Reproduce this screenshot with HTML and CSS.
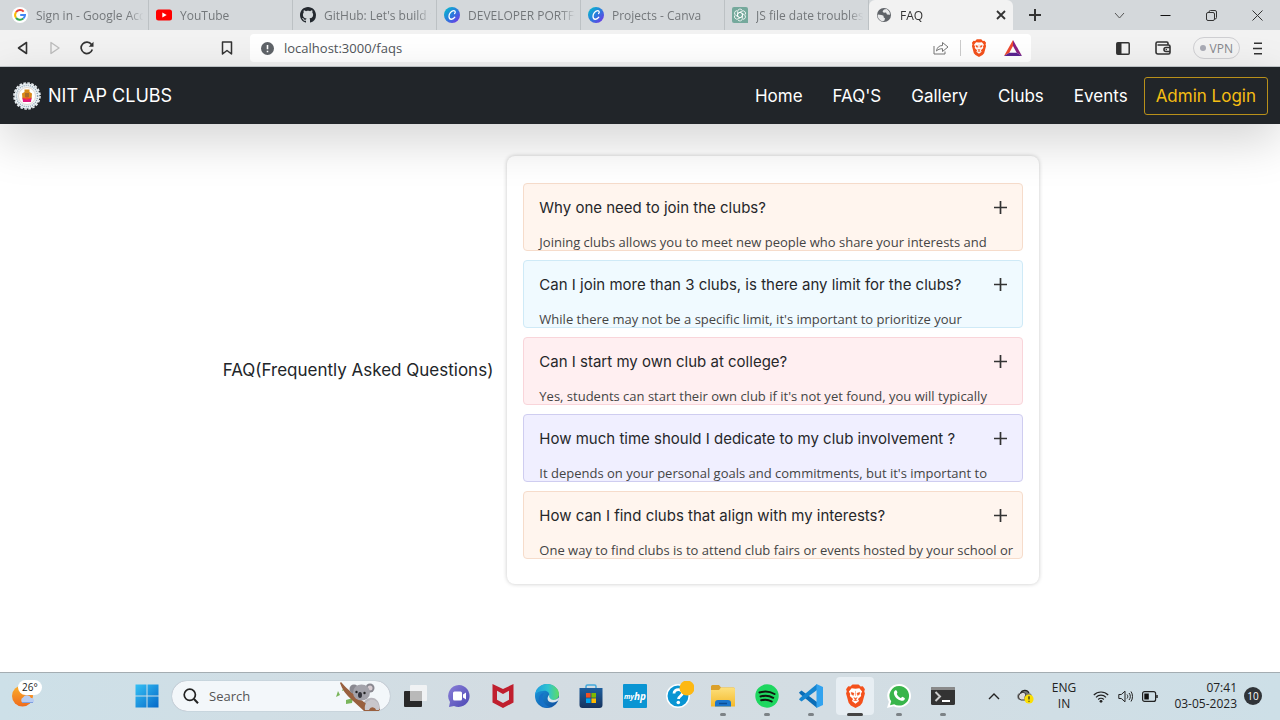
FILE: index.html
```html
<!DOCTYPE html>
<html lang="en">
<head>
<meta charset="utf-8">
<title>FAQ</title>
<link rel="stylesheet" href="styles.css">
</head>
<body>
<svg class="defs" aria-hidden="true">
  <defs>
    <linearGradient id="canva" x1="0" y1="0" x2="1" y2="1"><stop offset="0" stop-color="#00c4cc"/><stop offset=".5" stop-color="#2b7bdc"/><stop offset="1" stop-color="#7d2ae8"/></linearGradient>
    <linearGradient id="win" x1="0" y1="0" x2="1" y2="1"><stop offset="0" stop-color="#35c1f5"/><stop offset="1" stop-color="#0568c8"/></linearGradient>
    <linearGradient id="chat" x1="0" y1="0" x2="1" y2="1"><stop offset="0" stop-color="#8a7fd8"/><stop offset="1" stop-color="#4c48b4"/></linearGradient>
    <linearGradient id="edgeBlue" x1="0" y1="0" x2="1" y2="1"><stop offset="0" stop-color="#1b9de2"/><stop offset="1" stop-color="#0f4a9a"/></linearGradient>
    <linearGradient id="edgeTop" x1="0" y1="0" x2="1" y2="0"><stop offset="0" stop-color="#1d9ee0"/><stop offset=".55" stop-color="#2fc4cf"/><stop offset="1" stop-color="#5fdc62"/></linearGradient>
    <linearGradient id="sun" x1="0" y1="0" x2="0" y2="1"><stop offset="0" stop-color="#fbb02c"/><stop offset="1" stop-color="#ef6b1c"/></linearGradient>
    <linearGradient id="store" x1="0" y1="0" x2="0" y2="1"><stop offset="0" stop-color="#1d5f9e"/><stop offset="1" stop-color="#17335e"/></linearGradient>
    <linearGradient id="folder" x1="0" y1="0" x2="0" y2="1"><stop offset="0" stop-color="#fde07c"/><stop offset="1" stop-color="#f4b92b"/></linearGradient>
    <symbol id="i-canva" viewBox="0 0 16 16"><circle cx="8" cy="8" r="8" fill="url(#canva)"/><path d="M10.600 6.600c1-.8.9-3-.8-3C7.500 3.600 5 6.400 5 9.200c0 4 4 3.800 5.800 1" fill="none" stroke="#fff" stroke-width="1.300" stroke-linecap="round"/></symbol>
    <symbol id="i-brave" viewBox="0 0 24 28"><path d="M6 3 8.500.5h7L18 3l2.500-.3L23 6l-.8 2.500.8 2.500-3 11-2.500 3L12 28l-5.500-3L4 22 1 11l.8-2.500L1 6l2.500-3.300z" fill="#f4511c"/><path d="M12 5.500 16.500 5l3.200 3.800-1.500 3 .4 2.200-3.700 3.500 1.200 2.200L12 23l-4.100-3.300 1.200-2.200L5.400 14l.4-2.200-1.500-3L7.500 5z" fill="#fff"/><path d="M7 9.700l3.300 1.100-.8 2.600L7.300 12zM17 9.700l-3.300 1.100.8 2.600 2.200-1.400zM10 15.800l2 .8 2-.8-2 3zM12 8v6M9.600 19.500 12 18.300l2.400 1.200" fill="#f4511c" stroke="#f4511c" stroke-width=".5"/></symbol>
  </defs>
</svg>

<header class="tabs">
  <div class="tab"><svg class="fav" viewBox="0 0 16 16"><circle cx="8" cy="8" r="8" fill="#fff"/><g fill="none" stroke-width="2"><path d="M4 5.200A5 5 0 0 1 11.700 4.600" stroke="#ea4335"/><path d="M4 10.800a5 5 0 0 1 0-5.600" stroke="#fbbc05"/><path d="M11.300 11.600A5 5 0 0 1 4 10.800" stroke="#34a853"/><path d="M8.200 8H13a5 5 0 0 1-1.700 3.600" stroke="#4285f4"/></g></svg><span>Sign in - Google Acc</span></div>
  <div class="tab"><svg class="fav" viewBox="0 0 16 16"><rect y="2.500" width="16" height="11" rx="2.500" fill="#f00"/><path d="M6.300 5.500v5L10.700 8z" fill="#fff"/></svg><span>YouTube</span></div>
  <div class="tab"><svg class="fav" viewBox="0 0 16 16"><path fill="#24292f" d="M8 0C3.580 0 0 3.580 0 8c0 3.540 2.290 6.530 5.470 7.590.4.070.550-.17.550-.38 0-.19-.010-.82-.010-1.490-2.010.37-2.530-.49-2.690-.94-.09-.23-.48-.94-.82-1.130-.28-.15-.68-.52-.010-.53.630-.010 1.080.580 1.230.820.720 1.210 1.870.870 2.330.660.070-.52.280-.87.510-1.070-1.780-.2-3.640-.89-3.640-3.950 0-.87.310-1.590.820-2.150-.08-.2-.36-1.020.080-2.120 0 0 .67-.21 2.200.820.640-.18 1.320-.27 2-.27s1.360.090 2 .27c1.530-1.040 2.200-.82 2.200-.82.440 1.100.160 1.920.080 2.120.510.560.820 1.270.820 2.150 0 3.070-1.870 3.750-3.650 3.950.290.250.540.730.540 1.480 0 1.070-.010 1.930-.010 2.200 0 .21.150.460.550.380A8 8 0 0 0 16 8c0-4.420-3.580-8-8-8z"/></svg><span>GitHub: Let's build f</span></div>
  <div class="tab"><svg class="fav"><use href="#i-canva"/></svg><span>DEVELOPER PORTFO</span></div>
  <div class="tab"><svg class="fav"><use href="#i-canva"/></svg><span>Projects - Canva</span></div>
  <div class="tab"><svg class="fav" viewBox="0 0 16 16"><path d="M2 0h12a2 2 0 0 1 2 2v14H2a2 2 0 0 1-2-2V2a2 2 0 0 1 2-2z" fill="#75a99c"/><g fill="none" stroke="#fff" stroke-width=".8"><path id="petal" d="M5.600 6.600V4.400a2.500 2.500 0 0 1 4.600-1.200M8 5.200l2.400 1.400v2.800"/><use href="#petal" transform="rotate(60 8 8)"/><use href="#petal" transform="rotate(120 8 8)"/><use href="#petal" transform="rotate(180 8 8)"/><use href="#petal" transform="rotate(240 8 8)"/><use href="#petal" transform="rotate(300 8 8)"/></g></svg><span>JS file date troublesh</span></div>
  <div class="tab active"><svg class="fav" viewBox="0 0 16 16"><circle cx="8" cy="8" r="7" fill="#5f6368"/><path d="M2 7.500 5.500 8l2 .8.200 1.700 1.300.7-.5 2.300-1.500.8C4 14 1.800 11.500 1.600 8zM8 2.500 6.500 4.200l1.200 1.600 2.300-.3 1 2 3 .3C14 5 12.500 3 10.500 2z" fill="#e9eaeb"/></svg><span>FAQ</span><button class="icon-btn close" aria-label="Close tab"><svg width="10" height="10" viewBox="0 0 10 10"><path d="m1 1 8 8m0-8-8 8" stroke="#333" stroke-width="1.800"/></svg></button></div>
  <button class="icon-btn newtab" aria-label="New tab"><svg width="12" height="12" viewBox="0 0 12 12"><path d="M6 0v12M0 6h12" stroke="#333" stroke-width="2"/></svg></button>
  <div class="window-controls">
    <button class="icon-btn" aria-label="Search tabs"><svg width="11" height="11" viewBox="0 0 11 11"><path d="m1 3 4.500 5L10 3" fill="none" stroke="#555"/></svg></button>
    <button class="icon-btn" aria-label="Minimize"><svg width="11" height="11" viewBox="0 0 11 11"><path d="M.5 5.500h10" stroke="#111"/></svg></button>
    <button class="icon-btn" aria-label="Restore"><svg width="11" height="11" viewBox="0 0 11 11"><path d="M3 2.500V2A1.500 1.500 0 0 1 4.500.5H9A1.500 1.500 0 0 1 10.500 2v5.500A1.500 1.500 0 0 1 9 9" fill="none" stroke="#333"/><rect x=".5" y="2.500" width="8" height="8" rx="1.500" fill="none" stroke="#333"/></svg></button>
    <button class="icon-btn" aria-label="Close"><svg width="11" height="11" viewBox="0 0 11 11"><path d="m.5.5 10 10m0-10-10 10" stroke="#333"/></svg></button>
  </div>
</header>

<div class="toolbar">
  <div class="tools-left">
    <button class="icon-btn" aria-label="Back"><svg width="12" height="14" viewBox="0 0 12 14"><path d="M9.500 1.500v11L1.500 7z" fill="none" stroke="#333" stroke-width="1.600" stroke-linejoin="round"/></svg></button>
    <button class="icon-btn" aria-label="Forward"><svg width="12" height="14" viewBox="0 0 12 14"><path d="M2 1.500v11L10 7z" fill="none" stroke="#bdbdbd" stroke-width="1.400" stroke-linejoin="round"/></svg></button>
    <button class="icon-btn" aria-label="Reload"><svg width="14" height="14" viewBox="0 0 14 14"><path d="M12.300 8.500A5.700 5.700 0 1 1 11.500 3.500" fill="none" stroke="#333" stroke-width="1.700"/><path d="M13.500.8v5H8.700z" fill="#333"/></svg></button>
    <button class="icon-btn bookmark" aria-label="Bookmark"><svg width="12" height="14" viewBox="0 0 12 14"><path d="M1.500 1h9v12L6 9.500 1.500 13z" fill="none" stroke="#333" stroke-width="1.500" stroke-linejoin="round"/></svg></button>
  </div>
  <div class="address">
    <svg width="13" height="13" viewBox="0 0 13 13"><circle cx="6.500" cy="6.500" r="6.500" fill="#5f6368"/><path d="M6.500 3v4.300M6.500 8.700v1.500" stroke="#fff" stroke-width="1.600"/></svg>
    <input type="text" aria-label="Address" value="localhost:3000/faqs">
    <button class="icon-btn" aria-label="Share"><svg width="16" height="14" viewBox="0 0 16 14"><path d="M1 5v8h11v-2.500M3.500 10c.5-3.500 2.500-5.500 6-5.500V1.500L15 6l-5.500 4.500V7.700C6.800 7.700 5 8.500 3.500 10z" fill="none" stroke="#777" stroke-linejoin="round"/></svg></button>
    <span class="divider"></span>
    <button class="icon-btn" aria-label="Brave Shields"><svg width="16" height="18"><use href="#i-brave"/></svg></button>
    <button class="icon-btn rewards" aria-label="Rewards"><svg width="18" height="16" viewBox="0 0 18 16"><path d="M9 0 0 16l5.300-3.200L9 6z" fill="#ef4a2f"/><path d="m9 0 9 16-5.300-3.200L9 6z" fill="#8a2080"/><path d="M0 16h18l-5.300-3.200H5.300z" fill="#5a2390"/></svg></button>
  </div>
  <div class="tools-right">
    <button class="icon-btn" aria-label="Sidebar"><svg width="14" height="13" viewBox="0 0 14 13"><rect x=".8" y=".8" width="12.400" height="11.400" rx="1" fill="none" stroke="#333" stroke-width="1.500"/><path d="M1 1h4.500v11H1z" fill="#333"/></svg></button>
    <button class="icon-btn" aria-label="Wallet"><svg width="16" height="14" viewBox="0 0 16 14"><path d="M13 4V2.200A1.200 1.200 0 0 0 11.800 1H2.500A1.500 1.500 0 0 0 1 2.500V11a2 2 0 0 0 2 2h10.500A1.500 1.500 0 0 0 15 11.500v-6A1.500 1.500 0 0 0 13.500 4H2.500M15 6.500h-4a2 2 0 0 0 0 4h4" fill="none" stroke="#333" stroke-width="1.600"/><circle cx="11.300" cy="8.500" r=".8" fill="#333"/></svg></button>
    <button class="vpn">VPN</button>
    <button class="icon-btn menu" aria-label="Menu"><svg width="10" height="13" viewBox="0 0 10 13"><path d="M1 1.200h8M0 6.500h9M1 11.800h8" stroke="#333" stroke-width="1.500"/></svg></button>
  </div>
</div>

<div class="page">
  <nav class="navbar">
    <a class="brand" href="#">
      <svg width="28" height="28" viewBox="0 0 28 28"><circle cx="14" cy="14" r="12.500" fill="#eef3f6"/><circle cx="14" cy="14" r="13" fill="none" stroke="#e8eef2" stroke-width="1.600" stroke-dasharray="2.600 1.480"/><circle cx="14" cy="14" r="10.600" fill="none" stroke="#8fa3b2" stroke-width="1.400" stroke-dasharray="1 1.100"/><circle cx="14" cy="14" r="8.500" fill="#fff" stroke="#d6c8be" stroke-width=".7"/><path d="M9 11.500 11.500 10V7.500h5V10l2.500 1.500-.5 6h-9z" fill="#d98a19"/><path d="M12 11h4v4h-4z" fill="#a86a2a"/><path d="M9.500 15.500 14 17l4.500-1.500-.5 4.500h-8z" fill="#e0197d"/><path d="M10 16.500 14 15l4 1.500-4 1.200z" fill="#f04a2a"/></svg>
      <span>NIT AP CLUBS</span>
    </a>
    <div class="links">
      <a href="#">Home</a><a href="#">FAQ'S</a><a href="#">Gallery</a><a href="#">Clubs</a><a href="#">Events</a>
    </div>
    <button class="login">Admin Login</button>
  </nav>
  <main class="faq">
    <h1>FAQ(Frequently Asked Questions)</h1>
    <section class="card">
      <article class="item peach"><button class="question">Why one need to join the clubs?<svg width="13" height="13" viewBox="0 0 13 13"><path d="M6.500 0v13M0 6.500h13" stroke="#333" stroke-width="1.700"/></svg></button><p>Joining clubs allows you to meet new people who share your interests and</p></article>
      <article class="item sky"><button class="question">Can I join more than 3 clubs, is there any limit for the clubs?<svg width="13" height="13" viewBox="0 0 13 13"><path d="M6.500 0v13M0 6.500h13" stroke="#333" stroke-width="1.700"/></svg></button><p>While there may not be a specific limit, it's important to prioritize your</p></article>
      <article class="item rose"><button class="question">Can I start my own club at college?<svg width="13" height="13" viewBox="0 0 13 13"><path d="M6.500 0v13M0 6.500h13" stroke="#333" stroke-width="1.700"/></svg></button><p>Yes, students can start their own club if it's not yet found, you will typically</p></article>
      <article class="item violet"><button class="question">How much time should I dedicate to my club involvement ?<svg width="13" height="13" viewBox="0 0 13 13"><path d="M6.500 0v13M0 6.500h13" stroke="#333" stroke-width="1.700"/></svg></button><p>It depends on your personal goals and commitments, but it's important to</p></article>
      <article class="item peach"><button class="question">How can I find clubs that align with my interests?<svg width="13" height="13" viewBox="0 0 13 13"><path d="M6.500 0v13M0 6.500h13" stroke="#333" stroke-width="1.700"/></svg></button><p>One way to find clubs is to attend club fairs or events hosted by your school or</p></article>
    </section>
  </main>
</div>

<footer class="taskbar">
  <button class="weather" aria-label="Weather"><svg width="23" height="23" viewBox="0 0 23 23"><circle cx="10.500" cy="11" r="10.500" fill="url(#sun)"/><path d="M11 18a3 3 0 0 1 0-5.500 4.500 4.500 0 0 1 8 .5 2.500 2.500 0 0 1 1 5z" fill="#b9cdf2"/><path d="M10 17.500h11" stroke="#7f9fe0"/></svg><span class="temp">26°</span></button>
  <button class="app" aria-label="Start"><svg width="24" height="24" viewBox="0 0 24 24"><path d="M.5.500h11v11H.5zM12.500.5h11v11h-11zM.5 12.500h11v11H.5zM12.500 12.500h11v11h-11z" fill="url(#win)"/></svg></button>
  <label class="search">
    <svg width="16" height="16" viewBox="0 0 16 16"><circle cx="6.800" cy="6.800" r="5.600" fill="none" stroke="#222" stroke-width="1.700"/><path d="m11 11 4 4.200" stroke="#222" stroke-width="2"/></svg>
    <input type="text" placeholder="Search" aria-label="Search">
    <svg width="46" height="29" viewBox="0 0 46 29"><path d="m2 9-2 6 4-2zM8 4 6 9l3-1zM10 18l7-2-1 5-6 1z" fill="#79b55b"/><path d="M27 28c-1-6 1-11 7-12 6-1 10 4 10 12z" fill="#b9b7bd"/><path d="M34 18c5-1 9 3 9 9l-6 1z" fill="#d0ced2"/><path d="M5 0c5 6 9 9 14 13l14 11 11 3-1 2H28L16 18C10 13 6 7 4 1z" fill="#99603f"/><circle cx="18" cy="7" r="4.500" fill="#898890"/><circle cx="34" cy="6" r="4.500" fill="#898890"/><circle cx="34" cy="6" r="2.500" fill="#d8cdd2"/><ellipse cx="25.500" cy="10.500" rx="8.500" ry="8" fill="#a3a2aa"/><circle cx="20.500" cy="10" r="1.200" fill="#222"/><circle cx="28.500" cy="11" r="1.200" fill="#222"/><ellipse cx="24" cy="13" rx="2" ry="3" fill="#34343c"/><path d="M29 28c-1-6 2-10 7-10 5 0 7 4 7 10h-3c-1-3-5-4-7 0z" fill="#c9c7cc"/></svg>
  </label>
  <button class="app" aria-label="Task view"><svg width="24" height="24" viewBox="0 0 24 24"><rect x="1" y="7" width="18" height="16" rx="1" fill="#292929"/><rect x="7" y="1" width="17" height="16" rx="1" fill="#f7f7f7" opacity=".8"/><path d="M7 7h12v10H7z" fill="#b9b9b9"/></svg></button>
  <button class="app" aria-label="Chat"><svg width="24" height="24" viewBox="0 0 24 24"><path d="M12 1a11 11 0 1 1-5 21l-5 1 1-5A11 11 0 0 1 12 1z" fill="url(#chat)"/><rect x="6" y="7.500" width="9" height="9" rx="1.500" fill="#fff"/><path d="m16 10.500 3-2v7l-3-2z" fill="#fff"/></svg></button>
  <button class="app" aria-label="McAfee"><svg width="24" height="24" viewBox="0 0 24 24"><path d="m1.500 0 10.500 5L22.500 0v18.500L12 24 1.500 18.500zM6 6.800v8.900l6 3.200 6-3.200V6.800l-6 3.200z" fill="#c01f2e" fill-rule="evenodd"/></svg></button>
  <button class="app" aria-label="Edge"><svg width="24" height="24" viewBox="0 0 24 24"><circle cx="12" cy="12" r="12" fill="url(#edgeBlue)"/><path d="M0 11C1 4 6 0 12 0c7 0 12 5 12 10 0 4-3 6-6 6-4 0-5-2-4-4 1-3-2-6-6-5-4 0-7 2-8 4z" fill="url(#edgeTop)"/><path d="M9 9c-3 4-1 12 6 14-6 2-11-2-11-8 0-3 2-6 5-6z" fill="#1671c7"/><path d="M14.500 10.500c-1 2 0 5 4 5.500 2 0 4-1 5-2.500l.5 1.500c-1 2-3.500 3.500-6.500 3.500-5 0-6.500-4.500-3-8z" fill="#dbe5eb"/></svg></button>
  <button class="app" aria-label="Microsoft Store"><svg width="24" height="24" viewBox="0 0 24 24"><path d="M7 5V2.500A1.500 1.500 0 0 1 8.500 1h7A1.500 1.500 0 0 1 17 2.500V5" fill="none" stroke="#43a9dc" stroke-width="1.500"/><path d="M.5 4h23v17a3 3 0 0 1-3 3h-17a3 3 0 0 1-3-3z" fill="url(#store)"/><path d="M7 9h4.600v4.600H7z" fill="#f25022"/><path d="M12.400 9H17v4.600h-4.600z" fill="#7fba00"/><path d="M7 14.400h4.600V19H7z" fill="#00a4ef"/><path d="M12.400 14.400H17V19h-4.600z" fill="#ffb900"/></svg></button>
  <button class="app" aria-label="myHP"><svg width="24" height="24" viewBox="0 0 24 24"><rect width="24" height="24" rx="1" fill="#0a95d3"/><text x="1" y="15" class="hp-my">my</text><text x="11" y="16" class="hp">hp</text></svg></button>
  <button class="app" aria-label="HP Support Assistant"><svg width="30" height="30" viewBox="0 0 30 30"><circle cx="14" cy="15" r="11.200" fill="#0a95d3" stroke="#fff" stroke-width="1.500"/><path d="M10 12.500c0-5 8.500-5 8.500-.5 0 3-4 3-4 6" fill="none" stroke="#fff" stroke-width="2.800"/><circle cx="14.300" cy="21.500" r="1.800" fill="#fff"/><circle cx="23" cy="7" r="7.500" fill="#fdb813"/></svg></button>
  <button class="app running" aria-label="File Explorer"><svg width="24" height="24" viewBox="0 0 24 24"><path d="M0 2.500A1.500 1.500 0 0 1 1.500 1H8l2 2.500h12.500A1.500 1.500 0 0 1 24 5v17H0z" fill="#dba02b"/><path d="M0 6h8l2-2.500h12.500A1.500 1.500 0 0 1 24 5v17.500H0z" fill="url(#folder)"/><path d="M4 22.500V19a3 3 0 0 1 3-3h10a3 3 0 0 1 3 3v3.500z" fill="#1c76cc"/><path d="M8 19.500h8" stroke="#0b4e96" stroke-width="1.500"/></svg></button>
  <button class="app running" aria-label="Spotify"><svg width="24" height="24" viewBox="0 0 24 24"><circle cx="12" cy="12" r="11.700" fill="#1ed760"/><path d="M4.500 8.500c5-1.500 10.500-1 15 1.500M5.500 12.500c4.500-1.300 9-.8 12.700 1.300M6.200 16.300c3.700-1 7.300-.7 10.500 1.200" fill="none" stroke="#10180f" stroke-width="2" stroke-linecap="round"/></svg></button>
  <button class="app running" aria-label="Visual Studio Code"><svg width="24" height="24" viewBox="0 0 24 24"><path d="m0 8.500 2.500-2L18 18v6L1 10z" fill="#0a6db7"/><path d="m0 15.500 2.500 2L18 6V0L1 14z" fill="#1685d0"/><path d="m17.500 0 6.500 3v18l-6.500 3z" fill="#32a3ef"/></svg></button>
  <button class="app running current" aria-label="Brave"><svg width="21" height="24"><use href="#i-brave"/></svg></button>
  <button class="app running" aria-label="WhatsApp"><svg width="24" height="24" viewBox="0 0 24 24"><path d="M12.200 0a11.800 11.800 0 1 1-5.600 22.200L0 24l1.900-6.300A11.800 11.800 0 0 1 12.200 0z" fill="#fff"/><path d="M12.200 2a9.800 9.800 0 1 1-5 18.200L3 21.300l1.200-4A9.800 9.800 0 0 1 12.200 2z" fill="#38b54a"/><path d="M8 6.500c1-.8 1.700-.3 2.300 1.600.4 1-.8 1.500-.4 2.200 1 1.800 2.100 2.800 3.700 3.600.8.400 1.400-1.400 2.300-1 2.200 1 2.300 1.300 1.700 2.600-1.100 2.100-4 1.500-6.700-.2C8 13.300 5.300 8.700 8 6.500z" fill="#fff"/></svg></button>
  <button class="app running" aria-label="Terminal"><svg width="24" height="24" viewBox="0 0 24 24"><rect y="3" width="24" height="18" rx="1.500" fill="#333"/><path d="M0 6V4.500A1.500 1.500 0 0 1 1.500 3h21A1.500 1.500 0 0 1 24 4.500V6z" fill="#8a8a8a"/><path d="m4.500 8 4.500 4.500L4.500 17" fill="none" stroke="#ccc" stroke-width="2"/><path d="M11 17h8" stroke="#fff" stroke-width="2"/></svg></button>
  <div class="tray">
    <button class="icon-btn chevron" aria-label="Hidden icons"><svg width="12" height="8" viewBox="0 0 12 8"><path d="m1 7 5-5 5 5" fill="none" stroke="#222" stroke-width="1.400"/></svg></button>
    <button class="icon-btn cloud" aria-label="OneDrive"><svg width="17" height="15" viewBox="0 0 17 15"><path d="M4 11a3.500 3.500 0 0 1-.5-7C5 1 10 0 12 4c2 .2 3 2 3 4z" fill="#777"/><path d="M4 11a3.500 3.500 0 0 1-.5-6.500C6.500 2 10 4 8 8v3z" fill="#ddd" stroke="#333"/><path d="M3.500 4C5 1 10 0 12 4" fill="none" stroke="#222" stroke-width="1.200"/><circle cx="12" cy="10" r="4.600" fill="#fbdf04"/><path d="M12 7.300v3.300M12 11.700v1" stroke="#222" stroke-width="1.200"/></svg></button>
    <button class="lang">ENG<br>IN</button>
    <button class="status" aria-label="Network, volume and battery">
      <svg width="16" height="13" viewBox="0 0 16 13"><g fill="none" stroke="#222" stroke-width="1.200"><path d="M.8 5a10.200 10.200 0 0 1 14.400 0M3 7.300a7 7 0 0 1 10 0M5.200 9.500a4 4 0 0 1 5.600 0"/></g><circle cx="8" cy="11.300" r="1.400" fill="#222"/></svg>
      <svg width="15" height="13" viewBox="0 0 15 13"><path d="M.8 4.500h2.500L7 1.200v10.600L3.300 8.500H.8zM9 4.500c1 1.300 1 2.700 0 4M11 3c1.800 2 1.800 5 0 7M13 1.500c2 3 2 7 0 10" fill="none" stroke="#222"/></svg>
      <svg width="16" height="11" viewBox="0 0 16 11"><rect x=".6" y=".6" width="13" height="9.800" rx="2" fill="none" stroke="#222" stroke-width="1.200"/><path d="M2.300 2.500h4.500v6H2.300z" fill="#111"/><path d="M15 4v3" stroke="#222" stroke-width="1.500"/></svg>
    </button>
    <button class="clock">07:41<br>03-05-2023</button>
    <span class="badge">10</span>
  </div>
</footer>
</body>
</html>
```
FILE: styles.css
```css
* { box-sizing: border-box; }
body {
  margin: 0;
  min-height: 100vh;
  display: flex;
  flex-direction: column;
  background: #fff;
  color: #222;
  font-family: "Open Sans", "Noto Sans", sans-serif;
  font-size: 12px;
}
button, input { font: inherit; color: inherit; border: 0; padding: 0; background: none; }
a { color: inherit; text-decoration: none; }
svg { flex: none; display: block; }
.defs { position: absolute; width: 0; height: 0; }
.icon-btn { display: flex; align-items: center; justify-content: center; flex: none; }

/* Tab strip */
.tabs { display: flex; height: 30px; padding-left: 5px; background: #d4d8db; color: #73777a; }
.tab { display: flex; align-items: center; gap: 8px; flex: 0 1 144px; min-width: 0; padding: 0 0 0 7px; border-right: 1px solid #bcc1c4; }
.tab span {
  flex: 1;
  overflow: hidden;
  white-space: nowrap;
  -webkit-mask-image: linear-gradient(to right, #000 82%, transparent 96%);
  mask-image: linear-gradient(to right, #000 82%, transparent 96%);
}
.fav { width: 16px; height: 16px; }
.tab.active { padding-right: 7px; background: #f2f2f2; color: #333; border-radius: 6px 6px 0 0; border: 0; }
.newtab { width: 44px; }
.window-controls { display: flex; margin-left: auto; }
.window-controls .icon-btn { width: 46px; }

/* Toolbar */
.toolbar { display: flex; align-items: center; height: 37px; background: #f2f2f2; border-bottom: 1px solid #c3c8cb; }
.tools-left { display: flex; width: 250px; padding: 0 7px; }
.tools-left .icon-btn { width: 32px; }
.tools-left .bookmark { margin-left: auto; }
.address { display: flex; align-items: center; flex: 1; height: 28px; padding: 0 9px 0 11px; background: #fff; border-radius: 4px; }
.address input { flex: 1; min-width: 0; margin-left: 10px; font-size: 13px; color: #50555a; outline: 0; }
.divider { width: 1px; height: 16px; margin: 0 10px 0 11px; background: #ccc; }
.rewards { margin-left: 17px; }
.tools-right { display: flex; align-items: center; width: 249px; padding-right: 10px; justify-content: flex-end; }
.tools-right .icon-btn { width: 40px; }
.tools-right .menu { width: 24px; }
.vpn { display: flex; align-items: center; gap: 4px; height: 22px; margin: 0 6px 0 10px; padding: 0 6px; border: 1px solid #cfcfd2; border-radius: 11px; color: #85878c; }
.vpn::before { content: ""; width: 6px; height: 6px; border-radius: 50%; background: #a9abb5; }

/* Page */
.page { flex: 1; display: flex; flex-direction: column; font-family: Inter, "Open Sans", sans-serif; color: #212529; }
.navbar {
  position: relative;
  z-index: 1;
  display: flex;
  align-items: center;
  height: 57px;
  padding: 0 12px 0 13px;
  background: #212529;
  color: #fff;
  box-shadow: 0 16px 48px rgba(0, 0, 0, .175);
}
.brand { display: flex; align-items: center; gap: 7px; font-size: 18px; }
.links { display: flex; gap: 30px; margin: 0 16px 0 auto; font-size: 17px; }
.login { height: 38px; padding: 0 11px; border: 1px solid #b8901a; border-radius: 3px; color: #f5bd13; font-size: 17px; }
.faq { flex: 1; display: flex; align-items: center; justify-content: center; gap: 14px; padding: 32px 18px 88px 0; }
.faq h1 { margin: 0; font-size: 17px; font-weight: 400; }
.card {
  display: flex;
  flex-direction: column;
  gap: 9px;
  width: 532px;
  padding: 27px 16px 25px;
  border-radius: 8px;
  box-shadow: 0 0 4px rgba(0, 0, 0, .22);
}
.item { height: 68px; padding: 11px 15px; overflow: hidden; border: 1px solid; border-radius: 4px; }
.peach { background: #fff5ee; border-color: #f6dccb; }
.sky { background: #f0faff; border-color: #cfeaf7; }
.rose { background: #ffeff1; border-color: #f9d5da; }
.violet { background: #f0efff; border-color: #cfcdf0; }
.question { display: flex; align-items: center; justify-content: space-between; width: 100%; height: 24px; font-size: 15px; font-weight: 400; color: #26272a; }
.item p { margin: 13px 0 0; font-family: "Open Sans", sans-serif; font-size: 13px; line-height: 20px; white-space: nowrap; color: #444; }

/* Taskbar */
.taskbar { display: flex; align-items: center; height: 48px; padding-bottom: 1px; border-top: 1px solid #a4adb2; background: linear-gradient(to right, #cde0e8, #d3dce2 40%, #d3dde3 65%, #cddfe7); }
.weather { position: relative; width: 125px; padding-left: 12px; }
.temp { position: absolute; left: 18px; top: -5px; padding: 0 4px; border-radius: 8px; background: #fff; font-size: 10px; line-height: 15px; }
.app { position: relative; display: flex; align-items: center; justify-content: center; flex: none; width: 44px; height: 40px; }
.search { display: flex; align-items: center; gap: 10px; flex: none; width: 218px; height: 30px; margin: 0 3px; padding: 0 8px 0 11px; border-radius: 15px; background: #f3f7fa; box-shadow: 0 0 1px #889; }
.search input { flex: 1; min-width: 0; font-size: 13px; outline: 0; }
.search input::placeholder { color: #555; opacity: 1; }
.running::after { content: ""; position: absolute; left: 19px; bottom: 0; width: 6px; height: 3px; border-radius: 2px; background: #7c8286; }
.current::before { content: ""; position: absolute; inset: 1px 3px; border-radius: 4px; background: #e7eef3; }
.current svg { position: relative; }
.current::after { left: 14px; width: 16px; background: #444; }
.hp-my { font: italic 700 7px "Open Sans", sans-serif; fill: #fff; }
.hp { font: italic 700 10px "Open Sans", sans-serif; fill: #fff; }
.tray { display: flex; align-items: center; margin-left: auto; padding-right: 18px; }
.chevron { width: 32px; }
.cloud { width: 30px; }
.lang { width: 48px; line-height: 16px; text-align: center; }
.status { display: flex; align-items: center; justify-content: space-around; width: 74px; }
.clock { width: 75px; line-height: 16px; text-align: right; }
.badge { width: 18px; margin-left: 7px; border-radius: 50%; background: #303438; color: #fff; font-size: 10px; line-height: 18px; text-align: center; }
```
